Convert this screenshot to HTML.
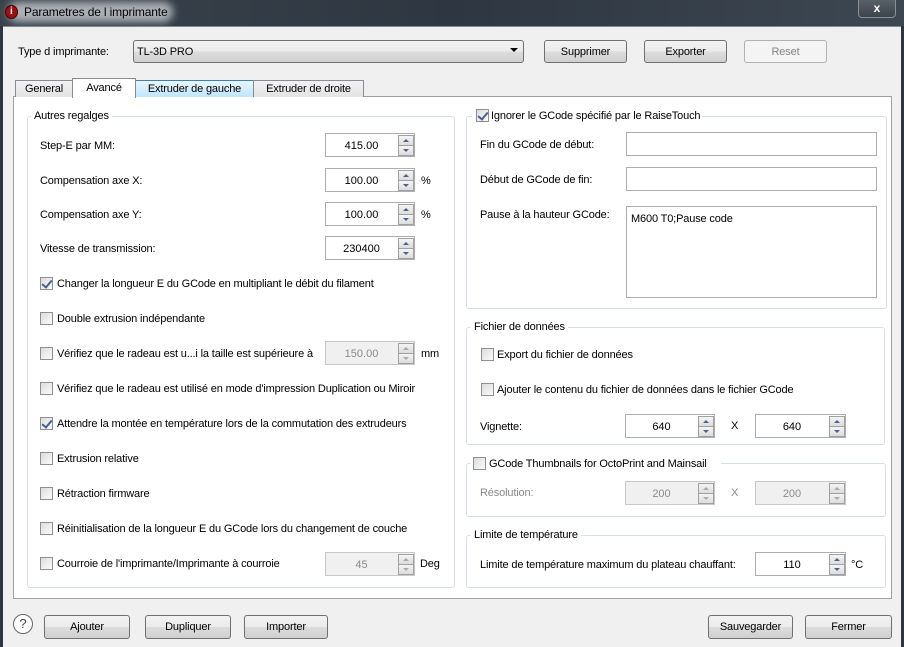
<!DOCTYPE html>
<html><head><meta charset="utf-8">
<style>
*{box-sizing:border-box}
body{margin:0;width:904px;height:647px;overflow:hidden;background:#f0f0f0;font-family:"Liberation Sans",sans-serif;font-size:11px;color:#000;position:relative}
.a{position:absolute}
.t{position:absolute;white-space:nowrap;line-height:14px;letter-spacing:-0.15px;margin-top:1px}
.btn{position:absolute;border:1px solid #707070;border-radius:3px;background:linear-gradient(#f2f2f2 0%,#ebebeb 50%,#dddddd 51%,#cfcfcf 100%);text-align:center;line-height:22px;font-size:11px;letter-spacing:-0.15px}
.btn.dis{border-color:#adb2b5;background:#f4f4f4;color:#838383}
.grp{position:absolute;border:1px solid #d5dfe5;border-radius:3px}
.gt{position:absolute;background:#fff;padding:0 3px;white-space:nowrap;line-height:14px;top:-8px;letter-spacing:-0.15px}
.cb{position:absolute;width:13px;height:13px;border:1px solid #8e8f8f;background:linear-gradient(135deg,#dcdcdc,#fbfbfb)}
.cb.on::after{content:"";position:absolute;left:3px;top:0px;width:4px;height:8px;border:solid #4a5f97;border-width:0 2px 2px 0;transform:rotate(40deg)}
.spin{position:absolute;height:24px;border:1px solid #abadb3;background:#fff}
.spin.dis{background:#f0f0f0;border-color:#c8c8c8;color:#8a8a8a}
.spin .v{position:absolute;left:0;right:17px;top:1px;line-height:22px;text-align:center}
.spin .b{position:absolute;right:0;width:16px;height:11px;border:1px solid #a0a0a0;background:linear-gradient(#f4f4f4,#dcdcdc)}
.spin .b::after{content:"";position:absolute;left:4px;border-left:3px solid transparent;border-right:3px solid transparent}
.spin .u{top:1px}.spin .u::after{top:3px;border-bottom:3px solid #4d6185}
.spin .d{top:11px}.spin .d::after{top:3px;border-top:3px solid #4d6185}
.spin.dis .u::after{border-bottom-color:#aaa}.spin.dis .d::after{border-top-color:#aaa}
.inp{position:absolute;border:1px solid #abadb3;background:#fff}
.tab{position:absolute;top:80px;height:17px;border:1px solid #898c95;border-bottom:none;background:linear-gradient(#f2f2f2,#e3e3e3);text-align:center;line-height:16px;letter-spacing:-0.15px}
</style></head><body>
<div class="a" style="left:0;top:0;width:904px;height:26px;background:linear-gradient(90deg,#3a434c,#2e3741 50%,#3d4751)"></div>
<div class="a" style="left:8px;top:2px;width:165px;height:20px;border-radius:10px;background:#c8ccd0;filter:blur(4px);opacity:0.8"></div>
<div class="a" style="left:5px;top:5px;width:13px;height:14px;border-radius:50%;background:#9c1010;border:1px solid #400"></div>
<div class="t" style="left:10px;top:4px;color:#fff;font-weight:bold;font-size:10px">i</div>
<div class="t" style="left:24px;top:4px;color:#000;font-size:12px">Parametres de l imprimante</div>
<div class="a" style="left:858px;top:-2px;width:38px;height:20px;border:1px solid #8a9099;border-radius:0 0 4px 4px;background:linear-gradient(#5a626b,#3b434b);color:#fff;text-align:center;font-weight:bold;line-height:18px;font-size:12px">x</div>
<div class="a" style="left:0;top:26px;width:3px;height:621px;background:#2e3741"></div>
<div class="a" style="left:901px;top:26px;width:3px;height:621px;background:#2e3741"></div>
<div class="a" style="left:3px;top:26px;width:898px;height:1px;background:#7f8a93"></div>

<div class="t" style="left:18px;top:44px">Type d imprimante:</div>
<div class="a" style="left:133px;top:40px;width:391px;height:23px;border:1px solid #707070;border-radius:3px;background:linear-gradient(#f2f2f2,#ebebeb 50%,#dddddd 51%,#cfcfcf)"></div>
<div class="t" style="left:137px;top:44px">TL-3D PRO</div>
<div class="a" style="left:510px;top:48px;border-left:4px solid transparent;border-right:4px solid transparent;border-top:4px solid #000"></div>
<div class="btn" style="left:544px;top:40px;width:83px;height:23px">Supprimer</div>
<div class="btn" style="left:644px;top:40px;width:83px;height:23px">Exporter</div>
<div class="btn dis" style="left:744px;top:40px;width:83px;height:23px">Reset</div>

<div class="a" style="left:13px;top:96px;width:879px;height:503px;background:#fff;border:1px solid #a0a0a0"></div>
<div class="tab" style="left:15px;width:58px">General</div>
<div class="tab" style="left:135px;width:119px;background:linear-gradient(#eaf6fd,#bee6fd);border-color:#3c7fb1">Extruder de gauche</div>
<div class="tab" style="left:253px;width:111px">Extruder de droite</div>
<div class="tab" style="left:72px;top:78px;width:64px;height:20px;background:#fff;line-height:18px">Avancé</div>

<div class="grp" style="left:27px;top:116px;width:428px;height:472px">
<div class="gt" style="left:3px">Autres regalges</div></div>
<div class="t" style="left:40px;top:138px">Step-E par MM:</div>
<div class="spin" style="left:325px;top:133px;width:90px"><div class="v">415.00</div><div class="b u"></div><div class="b d"></div></div>
<div class="t" style="left:40px;top:173px">Compensation axe X:</div>
<div class="spin" style="left:325px;top:168px;width:90px"><div class="v">100.00</div><div class="b u"></div><div class="b d"></div></div>
<div class="t" style="left:421px;top:173px">%</div>
<div class="t" style="left:40px;top:207px">Compensation axe Y:</div>
<div class="spin" style="left:325px;top:202px;width:90px"><div class="v">100.00</div><div class="b u"></div><div class="b d"></div></div>
<div class="t" style="left:421px;top:207px">%</div>
<div class="t" style="left:40px;top:241px">Vitesse de transmission:</div>
<div class="spin" style="left:325px;top:236px;width:90px"><div class="v">230400</div><div class="b u"></div><div class="b d"></div></div>

<div class="cb on" style="left:40px;top:277px"></div><div class="t" style="left:57px;top:276px">Changer la longueur E du GCode en multipliant le débit du filament</div>
<div class="cb" style="left:40px;top:312px"></div><div class="t" style="left:57px;top:311px">Double extrusion indépendante</div>
<div class="cb" style="left:40px;top:347px"></div><div class="t" style="left:57px;top:346px">Vérifiez que le radeau est u...i la taille est supérieure à</div>
<div class="spin dis" style="left:325px;top:341px;width:90px"><div class="v">150.00</div><div class="b u"></div><div class="b d"></div></div>
<div class="t" style="left:421px;top:346px">mm</div>
<div class="cb" style="left:40px;top:382px"></div><div class="t" style="left:57px;top:381px">Vérifiez que le radeau est utilisé en mode d'impression Duplication ou Miroir</div>
<div class="cb on" style="left:40px;top:417px"></div><div class="t" style="left:57px;top:416px">Attendre la montée en température lors de la commutation des extrudeurs</div>
<div class="cb" style="left:40px;top:452px"></div><div class="t" style="left:57px;top:451px">Extrusion relative</div>
<div class="cb" style="left:40px;top:487px"></div><div class="t" style="left:57px;top:486px">Rétraction firmware</div>
<div class="cb" style="left:40px;top:522px"></div><div class="t" style="left:57px;top:521px">Réinitialisation de la longueur E du GCode lors du changement de couche</div>
<div class="cb" style="left:40px;top:557px"></div><div class="t" style="left:57px;top:556px">Courroie de l'imprimante/Imprimante à courroie</div>
<div class="spin dis" style="left:325px;top:552px;width:90px"><div class="v">45</div><div class="b u"></div><div class="b d"></div></div>
<div class="t" style="left:420px;top:556px">Deg</div>

<div class="grp" style="left:466px;top:116px;width:421px;height:193px"></div>
<div class="a" style="left:472px;top:108px;width:230px;height:16px;background:#fff"></div>
<div class="cb on" style="left:476px;top:109px"></div><div class="t" style="left:491px;top:108px">Ignorer le GCode spécifié par le RaiseTouch</div>
<div class="t" style="left:480px;top:137px">Fin du GCode de début:</div>
<div class="inp" style="left:626px;top:132px;width:251px;height:24px"></div>
<div class="t" style="left:480px;top:172px">Début de GCode de fin:</div>
<div class="inp" style="left:626px;top:167px;width:251px;height:24px"></div>
<div class="t" style="left:480px;top:207px">Pause à la hauteur GCode:</div>
<div class="inp" style="left:626px;top:206px;width:251px;height:92px"></div>
<div class="t" style="left:631px;top:211px">M600 T0;Pause code</div>

<div class="grp" style="left:466px;top:327px;width:419px;height:118px"><div class="gt" style="left:4px">Fichier de données</div></div>
<div class="cb" style="left:481px;top:348px"></div><div class="t" style="left:497px;top:347px">Export du fichier de données</div>
<div class="cb" style="left:481px;top:383px"></div><div class="t" style="left:497px;top:382px">Ajouter le contenu du fichier de données dans le fichier GCode</div>
<div class="t" style="left:480px;top:419px">Vignette:</div>
<div class="spin" style="left:625px;top:414px;width:90px"><div class="v">640</div><div class="b u"></div><div class="b d"></div></div>
<div class="t" style="left:731px;top:418px">X</div>
<div class="spin" style="left:755px;top:414px;width:91px"><div class="v">640</div><div class="b u"></div><div class="b d"></div></div>

<div class="grp" style="left:466px;top:463px;width:420px;height:54px"></div>
<div class="a" style="left:471px;top:456px;width:250px;height:16px;background:#fff"></div>
<div class="cb" style="left:473px;top:457px"></div><div class="t" style="left:489px;top:456px">GCode Thumbnails for OctoPrint and Mainsail</div>
<div class="t" style="left:480px;top:485px;color:#8a8a8a">Résolution:</div>
<div class="spin dis" style="left:625px;top:481px;width:90px"><div class="v">200</div><div class="b u"></div><div class="b d"></div></div>
<div class="t" style="left:731px;top:485px;color:#8a8a8a">X</div>
<div class="spin dis" style="left:755px;top:481px;width:91px"><div class="v">200</div><div class="b u"></div><div class="b d"></div></div>

<div class="grp" style="left:466px;top:535px;width:420px;height:53px"><div class="gt" style="left:4px">Limite de température</div></div>
<div class="t" style="left:480px;top:557px">Limite de température maximum du plateau chauffant:</div>
<div class="spin" style="left:755px;top:552px;width:91px"><div class="v">110</div><div class="b u"></div><div class="b d"></div></div>
<div class="t" style="left:851px;top:557px">°C</div>

<div class="a" style="left:13px;top:614px;width:20px;height:20px;border:1px solid #666;border-radius:50%;text-align:center;line-height:18px;font-size:13px;color:#444;background:#fff">?</div>
<div class="btn" style="left:44px;top:615px;width:86px;height:24px">Ajouter</div>
<div class="btn" style="left:145px;top:615px;width:86px;height:24px">Dupliquer</div>
<div class="btn" style="left:244px;top:615px;width:84px;height:24px">Importer</div>
<div class="btn" style="left:708px;top:615px;width:85px;height:24px">Sauvegarder</div>
<div class="btn" style="left:805px;top:615px;width:87px;height:24px">Fermer</div>
</body></html>
